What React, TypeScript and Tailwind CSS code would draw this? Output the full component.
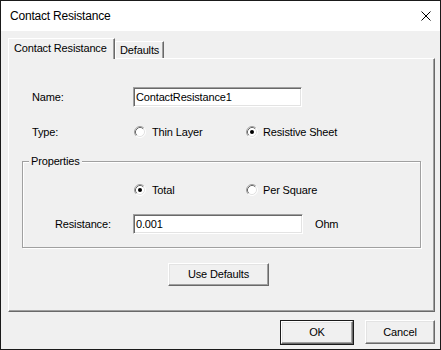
import React from "react";

function Radio({ checked }: { checked?: boolean }) {
  return (
    <svg width="12" height="12" viewBox="0 0 12 12" className="shrink-0">
      <circle cx="6" cy="6" r="5" fill="#fff" />
      <path d="M2.11 9.89 A5.5 5.5 0 0 1 9.89 2.11" fill="none" stroke="#a0a0a0" />
      <path d="M9.89 2.11 A5.5 5.5 0 0 1 2.11 9.89" fill="none" stroke="#ffffff" />
      <path d="M2.82 9.18 A4.5 4.5 0 0 1 9.18 2.82" fill="none" stroke="#696969" />
      <path d="M9.18 2.82 A4.5 4.5 0 0 1 2.82 9.18" fill="none" stroke="#e3e3e3" />
      {checked && <circle cx="6" cy="6" r="2" fill="#000" />}
    </svg>
  );
}

function Field({ value, className }: { value: string; className: string }) {
  return (
    <div
      className={
        "h-[20px] bg-white border border-t-[#a0a0a0] border-l-[#a0a0a0] border-r-white border-b-white shadow-[inset_1px_1px_0_#696969,inset_-1px_-1px_0_#e3e3e3] flex items-center pl-[2px] " +
        className
      }
    >
      {value}
    </div>
  );
}

function Button({ label, className }: { label: string; className: string }) {
  return (
    <div
      className={
        "h-[23px] flex items-center justify-center border border-t-white border-l-white border-r-[#696969] border-b-[#696969] shadow-[inset_-1px_-1px_0_#a0a0a0,inset_1px_1px_0_#e3e3e3] " +
        className
      }
    >
      {label}
    </div>
  );
}

export default function App() {
  return (
    <div
      className="w-[441px] h-[350px] border border-[#1a1a1a] flex flex-col bg-[#f0f0f0] text-[11px] text-black leading-[13px] tracking-[-0.15px]"
      style={{ fontFamily: '"Liberation Sans", Arial, sans-serif' }}
    >
      {/* Title bar */}
      <div className="h-[30px] shrink-0 bg-white flex items-center justify-between pl-[9px] pr-[9px]">
        <span className="text-[12px] leading-[16px] tracking-[-0.2px]">Contact Resistance</span>
        <svg width="10" height="10" viewBox="0 0 10 10">
          <path d="M0.5 0.5 L9.5 9.5 M9.5 0.5 L0.5 9.5" stroke="#000" strokeWidth="1" />
        </svg>
      </div>

      {/* Body */}
      <div className="flex-1 flex flex-col pl-[7px] pt-[7px] pr-[5px]">
        {/* Tabs */}
        <div className="flex items-end h-[20px]">
          <div className="relative z-10 h-[21px] mb-[-1px] w-[107px] bg-[#f0f0f0] border-t border-l border-t-white border-l-white border-r border-r-[#696969] shadow-[inset_-1px_0_0_#a0a0a0] flex items-center pl-[5px] pb-[1px]">
            Contact Resistance
          </div>
          <div className="h-[17px] w-[49px] border-t border-l border-t-white border-l-white border-r border-r-[#696969] shadow-[inset_-1px_0_0_#a0a0a0] flex items-center pl-[4px]">
            Defaults
          </div>
        </div>

        {/* Panel */}
        <div className="w-[427px] h-[254px] shrink-0 border border-t-white border-l-white border-r-[#696969] border-b-[#696969] shadow-[inset_-1px_-1px_0_#a0a0a0] flex flex-col pl-[13px]">
          <div className="mt-[28px] flex items-center h-[20px] pl-[10px]">
            <span className="w-[101px]">Name:</span>
            <Field value="ContactResistance1" className="w-[169px]" />
          </div>

          <div className="mt-[17px] flex items-center h-[16px] pl-[10px]">
            <span className="w-[102px]">Type:</span>
            <div className="w-[112px] flex items-center gap-[6px]">
              <Radio />
              <span>Thin Layer</span>
            </div>
            <div className="flex items-center gap-[5px]">
              <Radio checked />
              <span>Resistive Sheet</span>
            </div>
          </div>

          <fieldset className="mt-[15px] w-[399px] border border-[#a0a0a0] shadow-[inset_1px_1px_0_#fff,1px_1px_0_#fff] pb-[13px]">
            <legend className="ml-[6px] px-[2px] bg-[#f0f0f0] leading-[13px]">Properties</legend>
            <div className="mt-[14px] flex items-center h-[16px] pl-[111px]">
              <div className="w-[112px] flex items-center gap-[6px]">
                <Radio checked />
                <span>Total</span>
              </div>
              <div className="flex items-center gap-[5px]">
                <Radio />
                <span>Per Square</span>
              </div>
            </div>
            <div className="mt-[16px] flex items-center h-[20px] pl-[32px]">
              <span className="w-[78px]">Resistance:</span>
              <Field value="0.001" className="w-[170px]" />
              <span className="ml-[12px]">Ohm</span>
            </div>
          </fieldset>

          <div className="mt-[15px] pl-[146px]">
            <Button label="Use Defaults" className="w-[101px]" />
          </div>
        </div>

        {/* Bottom buttons */}
        <div className="mt-[8px] flex justify-end gap-[11px]">
          <div className="border border-[#1a1a1a]">
            <Button label="OK" className="w-[72px] h-[22px]" />
          </div>
          <Button label="Cancel" className="w-[70px] h-[24px]" />
        </div>
      </div>
    </div>
  );
}
